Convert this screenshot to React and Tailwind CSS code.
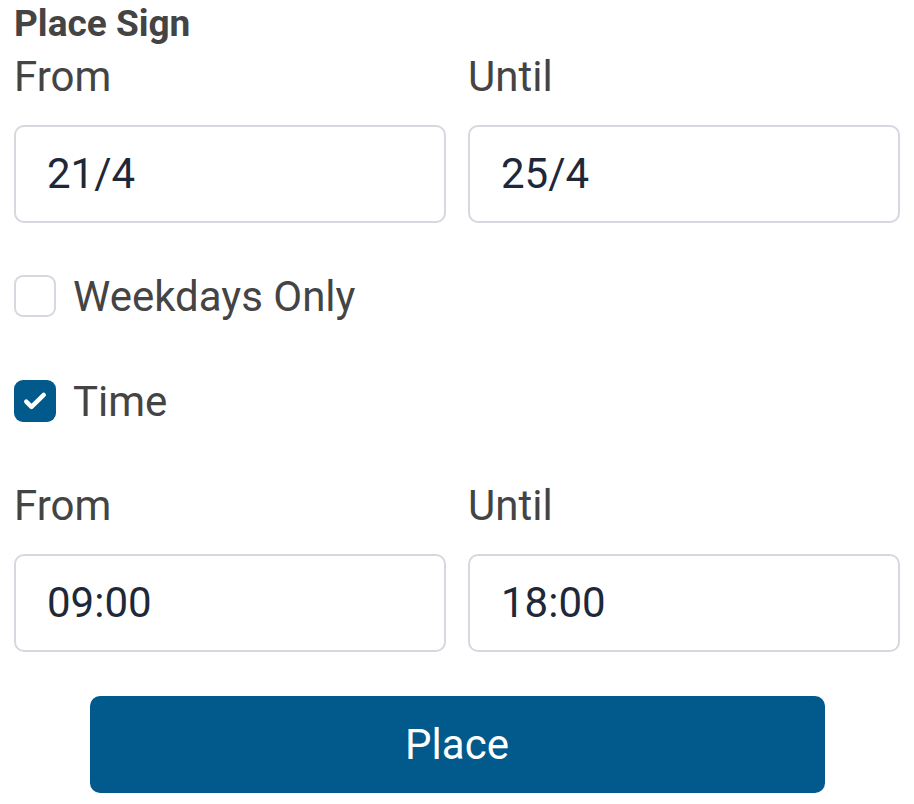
import React from "react";

function Field({ label, value }) {
  return (
    <div className="flex flex-col">
      <div className="text-[42px] leading-[56px] text-[#444444]">{label}</div>
      <div className="mt-[20px] h-[98px] rounded-[10px] border-2 border-[#d5d8de] flex items-center pl-[31px] pb-[2px] text-[42px] text-[#1e2838]">
        {value}
      </div>
    </div>
  );
}

function Check({ checked, label }) {
  return (
    <div className="flex items-center h-[60px]">
      {checked ? (
        <div className="w-[42px] h-[42px] rounded-[9px] bg-[#02598b] flex items-center justify-center">
          <svg width="28" height="28" viewBox="0 0 24 24" fill="none">
            <path d="M4.5 12.5l4.5 4.5L19.5 6.8" stroke="white" strokeWidth="3.8" strokeLinecap="round" strokeLinejoin="round" />
          </svg>
        </div>
      ) : (
        <div className="w-[42px] h-[42px] rounded-[9px] border-2 border-[#d5d8de] bg-white" />
      )}
      <span className="ml-[17px] text-[42px] text-[#444444]">{label}</span>
    </div>
  );
}

export default function App() {
  return (
    <div className="w-[914px] h-[804px] bg-white px-[14px] font-['Roboto',sans-serif]">
      <div className="text-[37px] leading-[48px] font-bold text-[#444444]">Place Sign</div>
      <div className="mt-[1px] grid grid-cols-2 gap-x-[22px]">
        <Field label="From" value="21/4" />
        <Field label="Until" value="25/4" />
      </div>
      <div className="mt-[43px]">
        <Check checked={false} label="Weekdays Only" />
      </div>
      <div className="mt-[45px]">
        <Check checked={true} label="Time" />
      </div>
      <div className="mt-[47px] grid grid-cols-2 gap-x-[22px]">
        <Field label="From" value="09:00" />
        <Field label="Until" value="18:00" />
      </div>
      <div className="mt-[44px] flex justify-center">
        <button className="w-[735px] h-[97px] rounded-[10px] bg-[#02598b] text-white text-[42px]">Place</button>
      </div>
    </div>
  );
}
